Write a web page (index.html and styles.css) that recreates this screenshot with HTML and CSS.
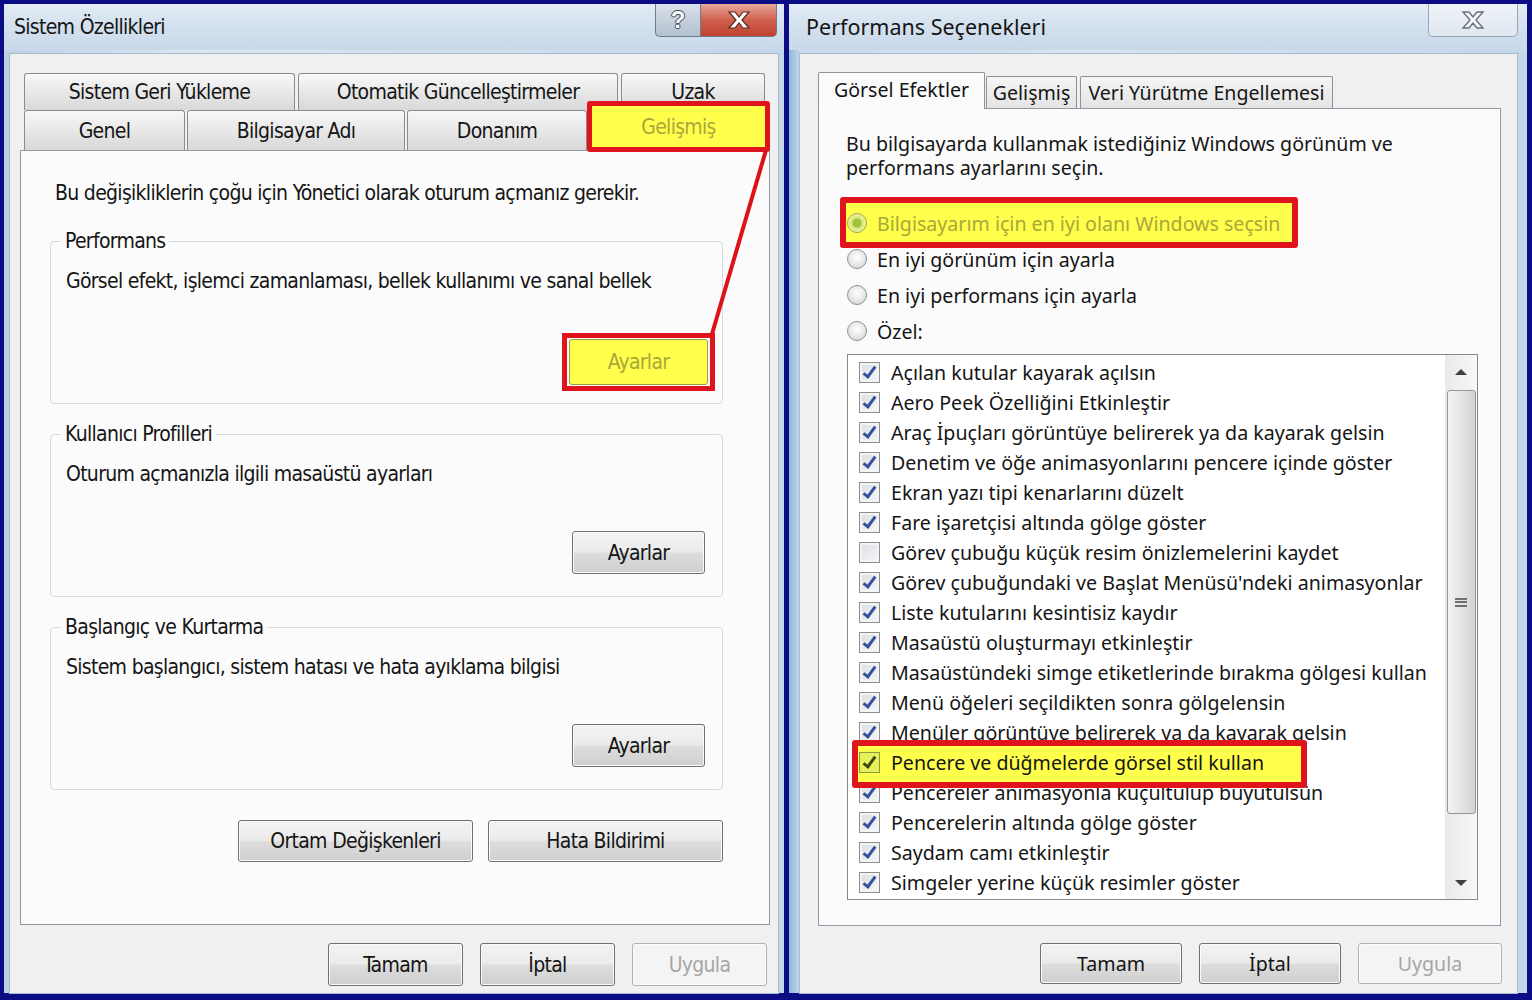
FILE: index.html
```html
<!DOCTYPE html>
<html lang="tr">
<head>
    <meta charset="UTF-8">
    <title>Sistem Özellikleri - Performans Seçenekleri</title>
    <link rel="stylesheet" href="styles.css">
</head>
<body>
<div class="screen">

    <!-- Sistem Özellikleri -->
    <div class="window sys-window">
        <div class="titlebar">
            <span class="title">Sistem Özellikleri</span>
            <div class="caption-btns">
                <span class="cap help">?</span>
                <span class="cap close">
                    <svg width="26" height="20" viewBox="0 0 26 20"><path d="M3 2h6l4 5 4-5h6l-7 8 7 8h-6l-4-5-4 5H3l7-8z" fill="#fff" stroke="#5a2a22" stroke-width="1.2"/></svg>
                </span>
            </div>
        </div>
        <div class="client">
            <div class="tab-row back">
                <span class="tab">Sistem Geri Yükleme</span>
                <span class="tab">Otomatik Güncelleştirmeler</span>
                <span class="tab">Uzak</span>
            </div>
            <div class="tab-row front">
                <span class="tab">Genel</span>
                <span class="tab">Bilgisayar Adı</span>
                <span class="tab">Donanım</span>
                <span class="tab marked">Gelişmiş</span>
            </div>
            <div class="tab-panel">
                <p class="intro">Bu değişikliklerin çoğu için Yönetici olarak oturum açmanız gerekir.</p>

                <div class="group">
                    <span class="group-label">Performans</span>
                    <p class="group-text">Görsel efekt, işlemci zamanlaması, bellek kullanımı ve sanal bellek</p>
                    <span class="mark-wrap"><span class="btn group-btn lit">Ayarlar</span></span>
                </div>

                <div class="group">
                    <span class="group-label">Kullanıcı Profilleri</span>
                    <p class="group-text">Oturum açmanızla ilgili masaüstü ayarları</p>
                    <span class="btn group-btn">Ayarlar</span>
                </div>

                <div class="group">
                    <span class="group-label">Başlangıç ve Kurtarma</span>
                    <p class="group-text">Sistem başlangıcı, sistem hatası ve hata ayıklama bilgisi</p>
                    <span class="btn group-btn">Ayarlar</span>
                </div>

                <div class="extra-btns">
                    <span class="btn wide-btn">Ortam Değişkenleri</span>
                    <span class="btn wide-btn">Hata Bildirimi</span>
                </div>
            </div>
            <div class="dialog-btns">
                <span class="btn">Tamam</span>
                <span class="btn">İptal</span>
                <span class="btn disabled">Uygula</span>
            </div>
        </div>
    </div>

    <!-- Performans Seçenekleri -->
    <div class="window perf-window">
        <div class="titlebar">
            <span class="title">Performans Seçenekleri</span>
            <div class="caption-btns">
                <span class="cap close plain">
                    <svg width="26" height="20" viewBox="0 0 26 20"><path d="M3 2h6l4 5 4-5h6l-7 8 7 8h-6l-4-5-4 5H3l7-8z" fill="#f4f6f8" stroke="#6b7078" stroke-width="1.4"/></svg>
                </span>
            </div>
        </div>
        <div class="client">
            <div class="perf-tabs">
                <span class="ptab active">Görsel Efektler</span>
                <span class="ptab">Gelişmiş</span>
                <span class="ptab">Veri Yürütme Engellemesi</span>
            </div>
            <div class="tab-panel">
                <p class="intro">Bu bilgisayarda kullanmak istediğiniz Windows görünüm ve<br>performans ayarlarını seçin.</p>

                <div class="radio-list">
                    <div class="radio-row marked"><span class="radio on"></span>Bilgisayarım için en iyi olanı Windows seçsin</div>
                    <div class="radio-row"><span class="radio"></span>En iyi görünüm için ayarla</div>
                    <div class="radio-row"><span class="radio"></span>En iyi performans için ayarla</div>
                    <div class="radio-row"><span class="radio"></span>Özel:</div>
                </div>

                <div class="listbox">
                    <ul class="check-list">
                        <li><span class="check on"></span>Açılan kutular kayarak açılsın</li>
                        <li><span class="check on"></span>Aero Peek Özelliğini Etkinleştir</li>
                        <li><span class="check on"></span>Araç İpuçları görüntüye belirerek ya da kayarak gelsin</li>
                        <li><span class="check on"></span>Denetim ve öğe animasyonlarını pencere içinde göster</li>
                        <li><span class="check on"></span>Ekran yazı tipi kenarlarını düzelt</li>
                        <li><span class="check on"></span>Fare işaretçisi altında gölge göster</li>
                        <li><span class="check"></span>Görev çubuğu küçük resim önizlemelerini kaydet</li>
                        <li><span class="check on"></span>Görev çubuğundaki ve Başlat Menüsü'ndeki animasyonlar</li>
                        <li><span class="check on"></span>Liste kutularını kesintisiz kaydır</li>
                        <li><span class="check on"></span>Masaüstü oluşturmayı etkinleştir</li>
                        <li><span class="check on"></span>Masaüstündeki simge etiketlerinde bırakma gölgesi kullan</li>
                        <li><span class="check on"></span>Menü öğeleri seçildikten sonra gölgelensin</li>
                        <li><span class="check on"></span>Menüler görüntüye belirerek ya da kayarak gelsin</li>
                        <li class="marked"><span class="check on"></span>Pencere ve düğmelerde görsel stil kullan</li>
                        <li><span class="check on"></span>Pencereler animasyonla küçültülüp büyütülsün</li>
                        <li><span class="check on"></span>Pencerelerin altında gölge göster</li>
                        <li><span class="check on"></span>Saydam camı etkinleştir</li>
                        <li><span class="check on"></span>Simgeler yerine küçük resimler göster</li>
                    </ul>
                    <div class="scrollbar">
                        <span class="arrow up"></span>
                        <span class="thumb"><span class="grip"></span></span>
                        <span class="arrow down"></span>
                    </div>
                </div>
            </div>
            <div class="dialog-btns">
                <span class="btn">Tamam</span>
                <span class="btn">İptal</span>
                <span class="btn disabled">Uygula</span>
            </div>
        </div>
    </div>

    <!-- kırmızı bağlantı çizgisi: Gelişmiş sekmesinden Ayarlar düğmesine -->
    <svg class="pointer-line" width="1532" height="1000" viewBox="0 0 1532 1000">
        <line x1="766" y1="150" x2="712" y2="334" stroke="#dc1219" stroke-width="4"/>
    </svg>
</div>
</body>
</html>
```

FILE: styles.css
```css
:root {
    --navy: #0c0c84;
    --client-bg: #f0f0f0;
    --panel-bg: #fbfbfb;
    --tab-border: #8c8c8c;
    --mark-red: #e0141c;
    --mark-yellow: #ffff4c;
    --mark-text: #a8a83a;
}

*, *::before, *::after {
    box-sizing: border-box;
}

body {
    margin: 0;
    background-color: var(--navy);
}

p {
    margin: 0;
}

.screen {
    position: relative;
    display: flex;
    gap: 5px;
    width: 1532px;
    height: 1000px;
    padding: 4px 5px 7px 4px;
    background-color: var(--navy);
}

/* Pencere çerçevesi */
.window {
    display: flex;
    flex-direction: column;
    background: linear-gradient(to right, #bed2e6, #dbe6f2 25%, #d2dfed 60%, #c4d6e9);
    color: #151515;
}

.perf-window {
    background: linear-gradient(to right, #8fb8dc, #c9dbec 12px, #d8e4f1 40%, #c4d6e9);
}

.sys-window {
    width: 780px;
    font-family: "DejaVu Sans Condensed", "Liberation Sans", sans-serif;
    font-size: 21px;
    letter-spacing: -0.7px;
}

.perf-window {
    width: 738px;
    font-family: "Noto Sans", "Open Sans", sans-serif;
    font-size: 19.6px;
}

.titlebar {
    flex: none;
    display: flex;
    justify-content: space-between;
    align-items: flex-start;
    height: 46px;
    background: linear-gradient(to bottom, #e2ebf5, #d3e0ee 50%, #c9d9ea);
}

.titlebar .title {
    line-height: 46px;
    padding-left: 10px;
}

.perf-window .titlebar .title {
    padding-left: 17px;
    font-size: 21.5px;
}

.caption-btns {
    display: flex;
    margin-right: 7px;
}

.perf-window .caption-btns {
    margin-right: 9px;
}

.cap {
    display: flex;
    align-items: center;
    justify-content: center;
    height: 33px;
    border: 1px solid #6f7c8a;
    border-top: none;
}

.cap.help {
    width: 45px;
    border-radius: 0 0 0 5px;
    border-right: none;
    background: linear-gradient(#d9e2ec, #b3c0ce);
    color: #fafafa;
    font-family: "Liberation Sans", sans-serif;
    font-weight: bold;
    font-size: 24px;
    letter-spacing: 0;
    text-shadow: -1px 0 #3e4a56, 1px 0 #3e4a56, 0 -1px #3e4a56, 0 1px #3e4a56;
}

.cap.close {
    width: 77px;
    border-radius: 0 0 5px 0;
    background: linear-gradient(#e8a89a, #d0604e 50%, #c0412f);
}

.cap.close.plain {
    width: 90px;
    border-radius: 0 0 5px 5px;
    border-color: #9aa6b3;
    background: linear-gradient(#eef3f8, #dfe7f0);
}

.client {
    flex: 1;
    display: flex;
    flex-direction: column;
    margin: 4px 6px 0 6px;
    padding: 19px 11px 0 10px;
    background-color: var(--client-bg);
    box-shadow: 0 0 0 1px #a9b9c9;
}

/* Sistem Özellikleri: iki sıra sekme */
.tab-row {
    display: grid;
    padding-left: 4px;
}

.tab-row.back {
    grid-template-columns: 271px 320px 144px;
    column-gap: 3px;
    height: 37px;
}

.tab-row.front {
    grid-template-columns: 161px 218px 180px 181px;
    column-gap: 2px;
    height: 40px;
}

.tab {
    display: flex;
    align-items: center;
    justify-content: center;
    border: 1px solid var(--tab-border);
    border-bottom: none;
    border-radius: 3px 3px 0 0;
    background: linear-gradient(#f8f8f8, #e8e8e8 50%, #d8d8d8);
}

.tab.marked {
    position: relative;
    z-index: 2;
    margin: -9px 0 -2px -2px;
    border: 5px solid var(--mark-red);
    border-radius: 3px;
    background: var(--mark-yellow);
    color: var(--mark-text);
}

.tab-panel {
    border: 1px solid #8e9aa6;
    background-color: var(--panel-bg);
}

.sys-window .tab-panel {
    display: flex;
    flex-direction: column;
    width: 750px;
    height: 775px;
    padding: 29px 46px 0 29px;
}

.sys-window .intro {
    margin-left: 5px;
    line-height: 26px;
}

.group {
    display: flex;
    flex-direction: column;
    align-items: flex-start;
    height: 163px;
    margin-top: 30px;
    padding: 0 17px 22px 15px;
    border: 1px solid #d3dce4;
    border-radius: 4px;
}

.intro + .group {
    margin-top: 35px;
}

.group-label {
    margin: -14px 0 0 -5px;
    padding: 0 4px;
    line-height: 26px;
    background-color: var(--panel-bg);
}

.group-text {
    margin-top: 14px;
    line-height: 26px;
    white-space: nowrap;
}

.btn {
    display: flex;
    align-items: center;
    justify-content: center;
    width: 135px;
    height: 43px;
    border: 1px solid #707070;
    border-radius: 3px;
    background: linear-gradient(#f3f3f3, #ebebeb 48%, #dddddd 52%, #cfcfcf);
    box-shadow: inset 0 0 0 1px #fbfbfb;
}

.btn.disabled {
    color: #a6a6a6;
    border-color: #adb2b5;
    background: #f4f4f4;
}

.group-btn {
    width: 133px;
    margin-top: auto;
    align-self: flex-end;
}

.mark-wrap {
    align-self: flex-end;
    margin: auto -10px -10px 0;
    padding: 1px 2px;
    border: 5px solid var(--mark-red);
}

.group-btn.lit {
    width: 139px;
    height: 46px;
    border-color: #9d9d40;
    background: var(--mark-yellow);
    color: var(--mark-text);
    box-shadow: none;
}

.extra-btns {
    display: flex;
    justify-content: flex-end;
    gap: 15px;
    margin-top: 30px;
}

.wide-btn {
    width: 235px;
    height: 42px;
}

.dialog-btns {
    display: flex;
    justify-content: flex-end;
    gap: 17px;
    margin-top: 18px;
}

/* Performans Seçenekleri */
.perf-window .client {
    margin: 4px 10px 0 11px;
    padding: 17px 15px 0 18px;
}

.perf-tabs {
    position: relative;
    z-index: 1;
    display: flex;
    align-items: flex-end;
    height: 37px;
}

.ptab {
    display: flex;
    align-items: center;
    justify-content: center;
    height: 32px;
    border: 1px solid #8e9199;
    border-bottom: none;
    border-radius: 2px 2px 0 0;
    background: linear-gradient(#f5f5f5, #e4e4e4);
}

.ptab:nth-child(2) {
    width: 91px;
    margin-left: 1px;
}

.ptab:nth-child(3) {
    width: 253px;
    margin-left: 3px;
}

.ptab.active {
    width: 167px;
    height: 37px;
    margin-bottom: -1px;
    background: var(--panel-bg);
    padding-bottom: 3px;
}

.perf-window .tab-panel {
    width: 683px;
    height: 818px;
    padding: 23px 20px 0 27px;
}

.perf-window .intro {
    line-height: 24px;
}

.radio-list {
    margin-top: 25px;
}

.radio-row {
    display: flex;
    align-items: center;
    gap: 10px;
    height: 36px;
    padding-left: 1px;
}

.radio-row.marked {
    position: relative;
    z-index: 1;
    color: var(--mark-text);
}

.radio-row.marked::before {
    content: "";
    position: absolute;
    z-index: -1;
    left: -6px;
    top: -8px;
    width: 458px;
    height: 51px;
    border: 6px solid var(--mark-red);
    border-radius: 3px;
    background: var(--mark-yellow);
}

.radio {
    width: 20px;
    height: 20px;
    border: 1px solid #8f8f8f;
    border-radius: 50%;
    background: radial-gradient(circle at 50% 40%, #ffffff, #e4e4e4 60%, #cfcfcf);
}

.radio.on {
    border-color: #9aa84a;
    background: radial-gradient(circle, #9fc43a 0 4px, #d6e27a 5px, #f2f59a 9px);
}

.listbox {
    display: flex;
    width: 631px;
    height: 546px;
    margin: 5px 0 0 1px;
    border: 1px solid #828790;
    background-color: #fff;
}

.check-list {
    flex: 1;
    margin: 0;
    padding: 2px 0 0;
    list-style: none;
    overflow: hidden;
}

.check-list li {
    display: flex;
    align-items: center;
    gap: 11px;
    height: 30px;
    padding-left: 11px;
    white-space: nowrap;
}

.check {
    position: relative;
    flex: none;
    width: 21px;
    height: 21px;
    border: 1px solid #8e8f8f;
    background: linear-gradient(135deg, #dadde2, #f6f7f8);
    box-shadow: inset 0 0 0 2px #f4f4f4;
}

.check.on::after {
    content: "";
    position: absolute;
    left: 6px;
    top: 1px;
    width: 7px;
    height: 14px;
    border-right: 3px solid #3551a0;
    border-bottom: 3px solid #3551a0;
    transform: rotate(36deg);
}

.check-list li.marked {
    position: relative;
    z-index: 1;
}

.check-list li.marked::before {
    content: "";
    position: absolute;
    z-index: -1;
    left: 4px;
    top: -7px;
    width: 455px;
    height: 48px;
    border: 6px solid var(--mark-red);
    border-radius: 3px;
    background: var(--mark-yellow);
}

.check-list li.marked .check {
    border-color: #8a9a3a;
    background: #e6f05a;
    box-shadow: none;
}

.check-list li.marked .check::after {
    border-color: #3c4a10;
}

.scrollbar {
    display: flex;
    flex-direction: column;
    align-items: center;
    width: 32px;
    background: linear-gradient(to right, #e9e9e9, #f7f7f7);
}

.arrow {
    display: flex;
    align-items: center;
    justify-content: center;
    width: 100%;
    height: 34px;
}

.arrow::after {
    content: "";
    border-left: 6px solid transparent;
    border-right: 6px solid transparent;
}

.arrow.up::after {
    border-bottom: 6px solid #404040;
}

.arrow.down {
    height: 32px;
    margin-top: auto;
}

.arrow.down::after {
    border-top: 6px solid #404040;
}

.thumb {
    display: flex;
    align-items: center;
    justify-content: center;
    width: 29px;
    height: 424px;
    margin-top: 1px;
    border: 1px solid #969696;
    border-radius: 3px;
    background: linear-gradient(to right, #f3f3f3, #e4e4e4 50%, #d2d2d2);
}

.grip {
    position: relative;
    width: 12px;
    height: 9px;
    border-top: 2px solid #707070;
    border-bottom: 2px solid #707070;
}

.grip::after {
    content: "";
    position: absolute;
    left: 0;
    right: 0;
    top: 1.5px;
    border-top: 2px solid #707070;
}

.perf-window .dialog-btns {
    gap: 17px;
    margin-top: 17px;
}

.perf-window .btn {
    width: 142px;
    height: 41px;
}

.perf-window .btn.disabled {
    width: 144px;
}

.pointer-line {
    position: absolute;
    top: 0;
    left: 0;
    pointer-events: none;
}
```
